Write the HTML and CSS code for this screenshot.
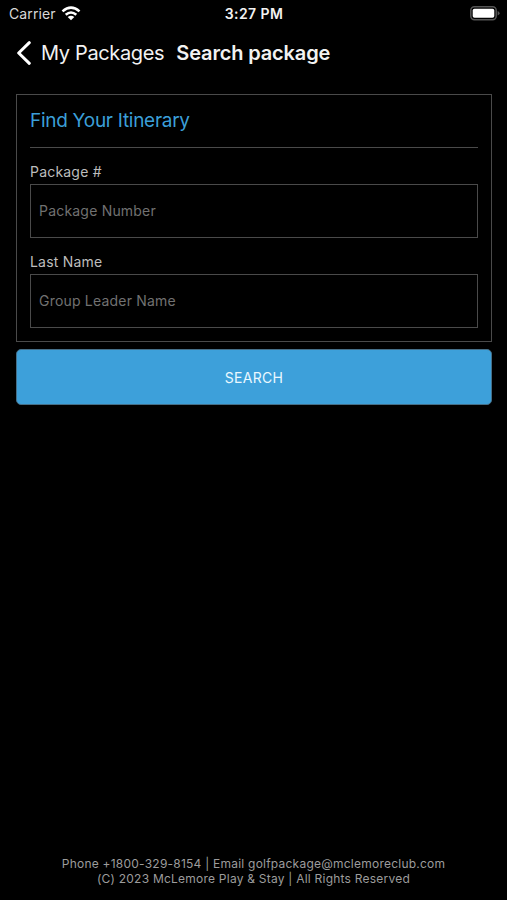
FILE: index.html
```html
<!DOCTYPE html>
<html lang="en">
<head>
<meta charset="utf-8">
<title>Search package</title>
<link rel="stylesheet" href="styles.css">
</head>
<body>
<div class="status-bar">
  <div class="carrier"><span>Carrier</span>
    <svg class="wifi" viewBox="0 0 20 15"><g fill="none" stroke="#fff" stroke-width="2.6"><path d="M1.5 5.4Q10-2.2 18.5 5.4"/><path d="M4.7 8.8Q10 4.2 15.3 8.8"/></g><path fill="#fff" d="M6.7 11Q10 8.4 13.3 11L10 14.3Z"/></svg>
  </div>
  <span class="time">3:27 PM</span>
  <svg class="battery" viewBox="0 0 30 15"><rect x=".8" y=".8" width="25.4" height="12.9" rx="3.6" fill="none" stroke="#555" stroke-width="1.5"/><rect x="2.7" y="2.7" width="21.6" height="9.1" rx="1.8" fill="#fff"/><path d="M27.6 5v4.6q2-.8 2-2.3T27.6 5z" fill="#555"/></svg>
</div>
<header class="nav">
  <svg class="back" viewBox="0 0 16 24"><path d="M13.3 1.7 2.7 12 13.3 22.3" fill="none" stroke="#fff" stroke-width="3" stroke-linecap="round" stroke-linejoin="round"/></svg>
  <a class="back-label">My Packages</a>
  <h1 class="title">Search package</h1>
</header>
<main class="content">
  <section class="card">
    <h2 class="card-title">Find Your Itinerary</h2>
    <label class="label" for="number">Package #</label>
    <input class="field" id="number" placeholder="Package Number">
    <label class="label" for="leader">Last Name</label>
    <input class="field" id="leader" placeholder="Group Leader Name">
  </section>
  <button class="search">SEARCH</button>
</main>
<footer class="footer">
  <div>Phone +1800-329-8154 | Email golfpackage@mclemoreclub.com</div>
  <div>(C) 2023 McLemore Play &amp; Stay | All Rights Reserved</div>
</footer>
</body>
</html>
```
FILE: styles.css
```css
* { box-sizing: border-box; }
body {
  margin: 0;
  height: 900px;
  display: flex;
  flex-direction: column;
  background: #000;
  color: #f2f2f2;
  font-family: Inter, "Liberation Sans", sans-serif;
  overflow: hidden;
}
.status-bar {
  height: 27px;
  padding: 0 7px 0 9px;
  display: grid;
  grid-template-columns: 1fr auto 1fr;
  align-items: center;
  white-space: nowrap;
}
.carrier { display: flex; align-items: center; gap: 5px; font-size: 14px; letter-spacing: .1px; color: #d8d8d8; }
.wifi { width: 20px; height: 15px; }
.time { font-size: 14px; font-weight: 600; letter-spacing: .4px; margin-right: 1px; }
.battery { width: 30px; height: 15px; justify-self: end; }
.nav { height: 51px; padding-left: 16px; display: flex; align-items: center; white-space: nowrap; }
.back { width: 16px; height: 24px; margin-right: 9px; }
.back-label { font-size: 20px; letter-spacing: -.35px; }
.title { margin: 0 0 0 12px; font-size: 20px; font-weight: 600; letter-spacing: -.15px; }
.content { padding: 16px 15px 0 16px; }
.card { height: 248px; border: 1px solid #4a4a4a; padding: 0 13px; margin-bottom: 7px; }
.card-title {
  height: 53px;
  margin: 0 0 12px;
  border-bottom: 1px solid #4a4a4a;
  color: #3b9fd8;
  font-size: 19px;
  font-weight: 400;
  line-height: 52px;
  letter-spacing: -.28px;
}
.label { display: block; height: 24px; font-size: 14px; line-height: 23px; letter-spacing: .2px; color: #bdbdbd; }
.field {
  display: block;
  width: 100%;
  height: 54px;
  margin-bottom: 12px;
  padding: 0 8px 1px;
  border: 1px solid #4a4a4a;
  border-radius: 0;
  background: #000;
  color: #ddd;
  font: 14px Inter, "Liberation Sans", sans-serif;
  letter-spacing: .2px;
}
.field::placeholder { color: #717171; opacity: 1; }
.search {
  display: block;
  width: 100%;
  height: 56px;
  border: 1px solid #456f88;
  border-radius: 5px;
  background: #3da0da;
  color: #eaf8ff;
  font: 14px Inter, "Liberation Sans", sans-serif;
  letter-spacing: .3px;
}
.footer { margin-top: auto; padding-bottom: 14px; text-align: center; font-size: 12px; line-height: 15px; letter-spacing: .23px; color: #9c9c9c; white-space: nowrap; }
```
